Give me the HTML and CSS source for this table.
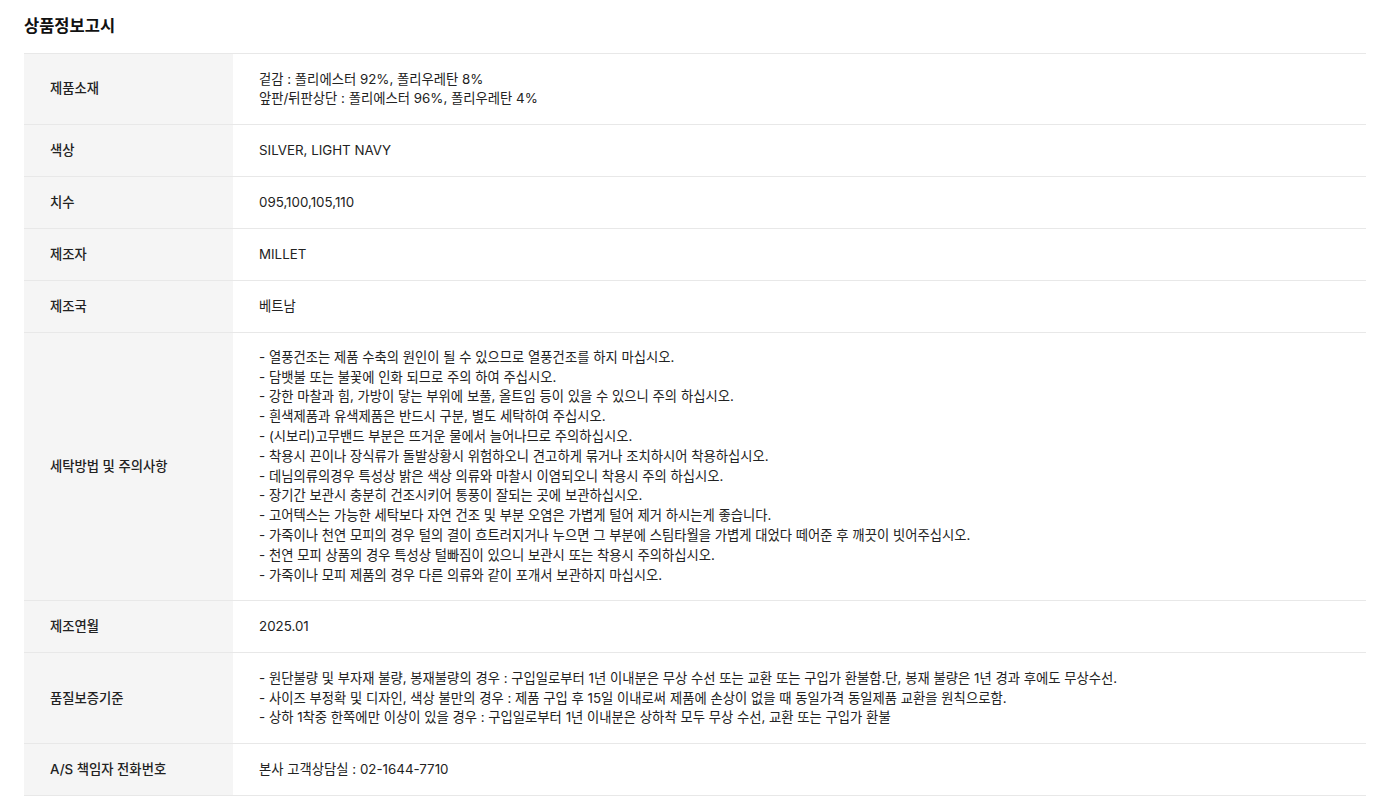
FILE: index.html
```html
<!DOCTYPE html>
<html lang="ko">
<head>
  <meta charset="UTF-8">
  <title>상품정보고시</title>
  <link rel="stylesheet" href="styles.css">
</head>
<body>
  <div class="notice">
    <h3 class="notice-title">상품정보고시</h3>
    <table class="notice-table">
      <tr>
        <th>제품소재</th>
        <td>겉감 : 폴리에스터 92%, 폴리우레탄 8%<br>앞판/뒤판상단 : 폴리에스터 96%, 폴리우레탄 4%</td>
      </tr>
      <tr>
        <th>색상</th>
        <td>SILVER, LIGHT NAVY</td>
      </tr>
      <tr>
        <th>치수</th>
        <td>095,100,105,110</td>
      </tr>
      <tr>
        <th>제조자</th>
        <td>MILLET</td>
      </tr>
      <tr>
        <th>제조국</th>
        <td>베트남</td>
      </tr>
      <tr>
        <th>세탁방법 및 주의사항</th>
        <td class="long">
          - 열풍건조는 제품 수축의 원인이 될 수 있으므로 열풍건조를 하지 마십시오.<br>
          - 담뱃불 또는 불꽃에 인화 되므로 주의 하여 주십시오.<br>
          - 강한 마찰과 힘, 가방이 닿는 부위에 보풀, 올트임 등이 있을 수 있으니 주의 하십시오.<br>
          - 흰색제품과 유색제품은 반드시 구분, 별도 세탁하여 주십시오.<br>
          - (시보리)고무밴드 부분은 뜨거운 물에서 늘어나므로 주의하십시오.<br>
          - 착용시 끈이나 장식류가 돌발상황시 위험하오니 견고하게 묶거나 조치하시어 착용하십시오.<br>
          - 데님의류의경우 특성상 밝은 색상 의류와 마찰시 이염되오니 착용시 주의 하십시오.<br>
          - 장기간 보관시 충분히 건조시키어 통풍이 잘되는 곳에 보관하십시오.<br>
          - 고어텍스는 가능한 세탁보다 자연 건조 및 부분 오염은 가볍게 털어 제거 하시는게 좋습니다.<br>
          - 가죽이나 천연 모피의 경우 털의 결이 흐트러지거나 누으면 그 부분에 스팀타월을 가볍게 대었다 떼어준 후 깨끗이 빗어주십시오.<br>
          - 천연 모피 상품의 경우 특성상 털빠짐이 있으니 보관시 또는 착용시 주의하십시오.<br>
          - 가죽이나 모피 제품의 경우 다른 의류와 같이 포개서 보관하지 마십시오.
        </td>
      </tr>
      <tr>
        <th>제조연월</th>
        <td>2025.01</td>
      </tr>
      <tr>
        <th>품질보증기준</th>
        <td>
          - 원단불량 및 부자재 불량, 봉재불량의 경우 : 구입일로부터 1년 이내분은 무상 수선 또는 교환 또는 구입가 환불함.단, 봉재 불량은 1년 경과 후에도 무상수선.<br>
          - 사이즈 부정확 및 디자인, 색상 불만의 경우 : 제품 구입 후 15일 이내로써 제품에 손상이 없을 때 동일가격 동일제품 교환을 원칙으로함.<br>
          - 상하 1착중 한쪽에만 이상이 있을 경우 : 구입일로부터 1년 이내분은 상하착 모두 무상 수선, 교환 또는 구입가 환불
        </td>
      </tr>
      <tr>
        <th>A/S 책임자 전화번호</th>
        <td>본사 고객상담실 : 02-1644-7710</td>
      </tr>
    </table>
  </div>
</body>
</html>
```

FILE: styles.css
```css
body {
  margin: 0;
  font-family: Inter, "Noto Sans CJK KR", sans-serif;
  color: #222;
  background: #fff;
}
.notice {
  padding: 14px 30px 0 24px;
}
.notice-title {
  margin: 0 0 15px;
  font-size: 16.5px;
  font-weight: 700;
  line-height: 24px;
  color: #111;
}
.notice-table {
  width: 100%;
  border-collapse: collapse;
  border-top: 1px solid #e8e8e8;
  font-size: 13.33px;
  line-height: 19.5px;
}
.notice-table tr {
  border-bottom: 1px solid #e8e8e8;
}
.notice-table th {
  width: 157px;
  padding: 15.7px 26px;
  background-color: #f5f5f5;
  font-weight: 500;
  text-align: left;
  vertical-align: middle;
  color: #222;
}
.notice-table td {
  padding: 15.7px 26px;
  vertical-align: middle;
  color: #222;
}
.notice-table td.long {
  line-height: 19.8px;
  padding: 15px 26px;
}
```
